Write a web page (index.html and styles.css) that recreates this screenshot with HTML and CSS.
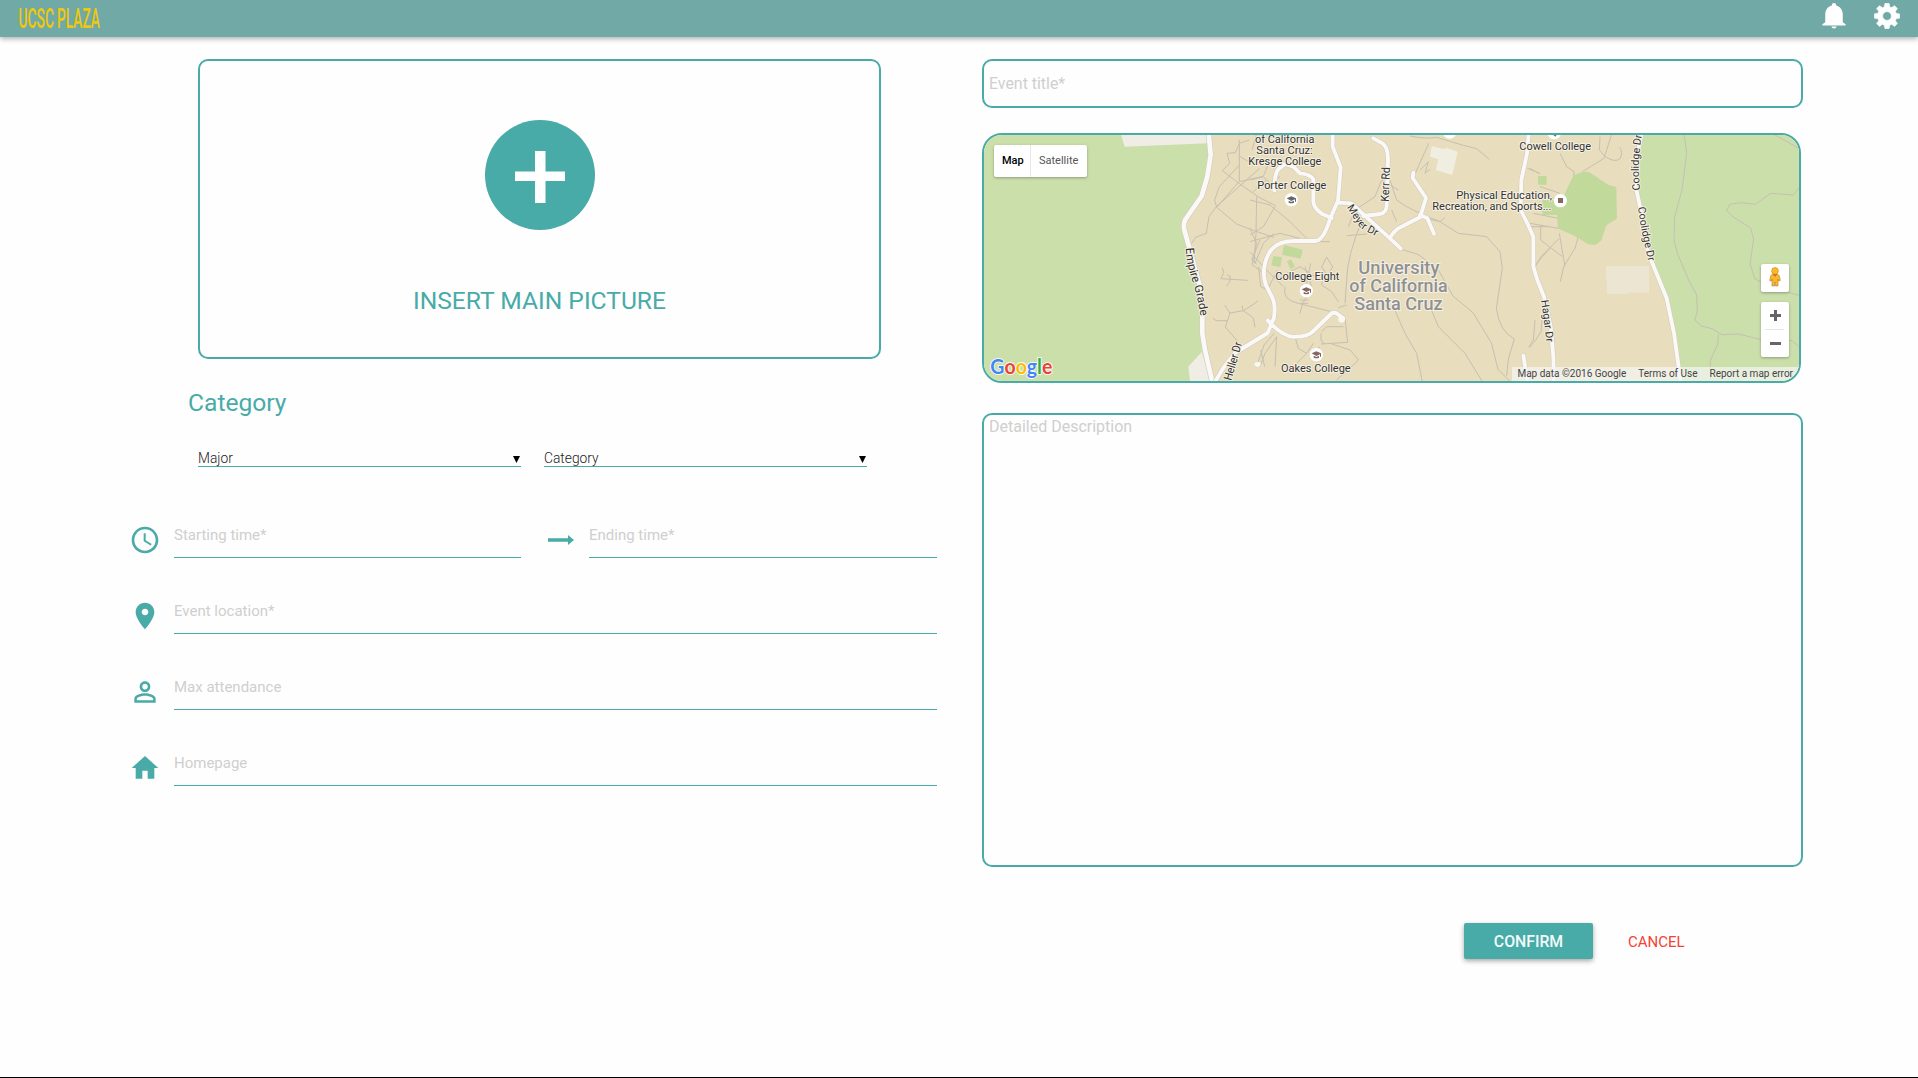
FILE: index.html
```html
<!DOCTYPE html>
<html lang="en">
<head>
<meta charset="utf-8">
<title>UCSC Plaza</title>
<link rel="stylesheet" href="styles.css">
</head>
<body>
<header class="topbar">
  <svg class="brand" width="82" height="24" viewBox="0 0 82 24"><text x="-.5" y="22" textLength="35.500" lengthAdjust="spacingAndGlyphs">UCSC</text><text x="38" y="22" textLength="43" lengthAdjust="spacingAndGlyphs">PLAZA</text></svg>
  <div class="topbar-actions">
    <svg width="30" height="30" viewBox="0 0 24 24"><path d="M12 22c1.100 0 2-.6 2-1.600h-4c0 1 .89 1.600 2 1.600zm7-5v-6.500c0-3.400-2-6.200-5.300-7V2.900c0-.8-.8-1.400-1.700-1.400s-1.700.6-1.700 1.400v.6C7 4.300 5 7.100 5 10.500V17l-2.300 1.600v.9h18.600v-.9z"/></svg>
    <svg width="30" height="30" viewBox="0 0 24 24"><path d="M19.430 12.980c.04-.32.07-.64.07-.98s-.03-.66-.07-.98l2.110-1.650c.19-.15.24-.42.12-.64l-2-3.460c-.12-.22-.39-.3-.61-.22l-2.490 1c-.52-.4-1.080-.73-1.690-.98l-.38-2.650C14.460 2.180 14.250 2 14 2h-4c-.25 0-.46.18-.49.42l-.38 2.650c-.61.25-1.170.59-1.690.98l-2.490-1c-.23-.09-.49 0-.61.22l-2 3.460c-.13.22-.07.49.12.64l2.110 1.650c-.04.32-.07.65-.07.98s.03.66.07.98l-2.110 1.650c-.19.15-.24.42-.12.64l2 3.460c.12.22.39.3.61.22l2.490-1c.52.4 1.080.73 1.690.98l.38 2.650c.03.24.24.42.49.42h4c.25 0 .46-.18.49-.42l.38-2.650c.61-.25 1.170-.59 1.690-.98l2.490 1c.23.09.49 0 .61-.22l2-3.460c.12-.22.07-.49-.12-.64z" fill="none"/><path fill-rule="evenodd" d="M10.300 2h3.400l.5 2.700 1.500.6L18 3.700 20.300 6l-1.600 2.300.6 1.500 2.700.5v3.400l-2.700.5-.6 1.500 1.600 2.300-2.300 2.300-2.300-1.600-1.500.6-.5 2.700h-3.400l-.5-2.700-1.500-.6L6 20.300 3.700 18l1.600-2.300-.6-1.500L2 13.700v-3.400l2.700-.5.6-1.500L3.700 6 6 3.700l2.300 1.600 1.500-.6zM12 8.500a3.500 3.500 0 1 0 0 7 3.500 3.500 0 1 0 0-7z" stroke="#fff" stroke-width=".5" stroke-linejoin="round"/></svg>
  </div>
</header>
<main class="page">
  <section class="left">
    <div class="picture">
      <div class="add"><svg width="50" height="52" viewBox="0 0 50 52"><path d="M20 0h10.500v20.500H50v9.500H30.500v22H20V30H0v-9.500h20z"/></svg></div>
      <div class="picture-label">INSERT MAIN PICTURE</div>
    </div>
    <h2 class="heading">Category</h2>
    <div class="selects">
      <div class="select"><span>Major</span><svg width="7" height="7" viewBox="0 0 7 7"><path d="M0 0h7L3.500 7z"/></svg></div>
      <div class="select"><span>Category</span><svg width="7" height="7" viewBox="0 0 7 7"><path d="M0 0h7L3.500 7z"/></svg></div>
    </div>
    <div class="rows">
      <div class="row">
        <svg class="icon" viewBox="0 0 24 24"><path d="M11.990 2C6.470 2 2 6.480 2 12s4.470 10 9.990 10C17.520 22 22 17.520 22 12S17.520 2 11.990 2zM12 20c-4.420 0-8-3.580-8-8s3.580-8 8-8 8 3.580 8 8-3.580 8-8 8zm.5-13H11v6l5.250 3.150.75-1.230-4.500-2.670z"/></svg>
        <label class="field start">Starting time*</label>
        <svg class="arrow" width="26" height="10" viewBox="0 0 26 10"><path d="M0 3.200h20V0l6 5-6 5V6.800H0z"/></svg>
        <label class="field">Ending time*</label>
      </div>
      <div class="row">
        <svg class="icon" viewBox="0 0 24 24"><path d="M12 2C8.130 2 5 5.130 5 9c0 5.250 7 13 7 13s7-7.750 7-13c0-3.870-3.130-7-7-7zm0 9.500c-1.380 0-2.500-1.120-2.500-2.500s1.120-2.500 2.500-2.500 2.500 1.120 2.500 2.500-1.120 2.500-2.500 2.500z"/></svg>
        <label class="field">Event location*</label>
      </div>
      <div class="row">
        <svg class="icon" viewBox="0 0 24 24"><path d="M12 5.900c1.160 0 2.100.94 2.100 2.100s-.94 2.100-2.100 2.100S9.900 9.160 9.900 8s.94-2.100 2.100-2.100m0 9c2.970 0 6.100 1.460 6.100 2.100v1.100H5.900V17c0-.64 3.130-2.100 6.100-2.100M12 4C9.790 4 8 5.790 8 8s1.790 4 4 4 4-1.790 4-4-1.790-4-4-4zm0 9c-2.670 0-8 1.340-8 4v3h16v-3c0-2.660-5.330-4-8-4z"/></svg>
        <label class="field">Max attendance</label>
      </div>
      <div class="row">
        <svg class="icon" viewBox="0 0 24 24"><path d="M10 20v-6h4v6h5v-8h3L12 3 2 12h3v8z"/></svg>
        <label class="field">Homepage</label>
      </div>
    </div>
  </section>
  <section class="right">
    <div class="title-box">Event title*</div>
    <div class="map">
      <svg class="map-art" viewBox="42 45 2445 738">
        <rect class="green" x="42" y="45" width="2445" height="738"/>
        <path class="sand" d="M716 40L722 105 712 170 695 228 645 300 643 330 657 380 690 500 697 640 705 690 728 790H2133L2112 640 2090 535 2035 400 2010 260 1998 200 2012 40z"/>
        <path class="pale" d="M452 40L464 80 712 70V40zM655 740L695 696 725 790H661z"/>
        <path class="pale" d="M1908 438h129v80h-62v4h-64v-42h-3z" opacity=".5"/>
        <g class="paths">
          <path d="M665 370l12-18 32-12 8-50 22-30 130-115M740 262l65-75M740 262l-6-22 14-40 60-65M740 262l60 50 52 20 60 20M757 152l50 38 60 42 50 25M757 152l22-22-8-30 25-2 12-28 30-10M808 60v125l72-16 20-50M808 108l24 15M860 230l-2 110-6 90M840 325l20 45-14 64 28 20M757 443l4 15-8 18 80 5M771 464l10 6-2 16-10 12M728 594l10 8h35M764 555l16 24 40-7 32-20 12-10M780 579l-14 42 36 42M820 572l-4-16M820 572l30 22 5 28M912 640l-30 35-17 50M872 690l12 50"/>
          <path d="M855 430L880 370 912 340M866 440l6 60 20 10 30-60" />
        </g>
        <g class="paths" transform="translate(840 0)">
          <path d="M0 180l40-10 20 20 30-20M10 215l40-35M20 40l-14 50M0 240l60 15 60 50 50 50M0 365l90-25 60 15M75 260l-35 60-40 25M0 395l40 45M30 360l-25 60 15 12M150 365h90M230 411l-15 30 18 25 15-25zM182 430l-12 60M165 440l20 60M105 500q-10 40 40 50l120 30M90 470l60-30 60 40M40 440l60 60M150 580l8-30 15-25M150 540h25M152 550h22M265 545l-20-30-30-20 5-40M290 555l-25 8M340 290q-50 120-50 190l-5 70M291 347l60-5M445 210l-50-30-20 50-60 40-20 50M420 180l20 60 30 20 40 20M425 270l15 35M480 48q50 10 80 4l80 24 40 10 38 32M536 70l-40 90M510 290l60 15 55 35 85 10 40 45 7 50-18 120q10 70 54 92l-18 60-5 50M520 285l50 20 15-12M454 388l50 15 60 45 45 80 60 50 55 90 20 80 35 35M430 560l35 80 35 60 18 90M540 560l25 60 80 80 55 90M285 595l8 72-80 5M215 635l15-15h50M213 640v20l10 12M210 680l-30 25M135 650l10 35 25 15 20-30M80 650l-5 90M80 650l-35 50-15 40M240 670l60 20 26 30-66 60M170 700l-30 30M510 150l25-25-10 35 15-12M840 145l28 16M900 320h-60M900 385l-45 50M855 600l-5 60-14 22"/>
        </g>
        <g class="paths" transform="translate(1650 0)">
          <path d="M120 100l20 40 22 15-3 35-44 90v45M187 155l65-40 24-75M240 50l-2 40 18 20q30 20 45 5 8-20-2-33M22 145l38 15M40 280l75 15M30 310l85 15M62 315v45l65 50M118 340l12 70 5 30M175 350l-10 35-34 55-10 45M118 355l-55 55-20 35M66 600l-3 35-16 25-18 22M115 240l-50-20M60 200l60 20"/>
          <path d="M492 40l8 60-14 110-22 80-2 70 10 40 34 80 24 45 2 50-8 25 20 18 32 8 30 18 50-2 80 20h80l26 22M595 642l-2 30-22 50v60M765 45l75 42M840 200l-20 25-68-5-46 33-44-5-32 5-10 18 20 20 52 33 9 33-11 75 15 45 20 10 80 30 36 10"/>
        </g>
        <path class="park" d="M1838 155h18l60 40 23 6 2 95-32 20-15 45-17 14-22-2-45-27-45-20-4-50 30-70 20-40zM1704 168h26v26h-26zM1717 240h48v45h-48zM942 375l56 14-6 27-56-12zM910 408l26 4-5 30-27-6zM951 424l12-6 12 22-14 8z"/>
        <path class="building" d="M1385 78l38 10 4-5 36 12-16 70-50-15 8-32-25-8z"/>
        <g class="casing"><path d="M716 40L722 105 712 170 695 228 645 300Q640 315 643 330L657 380 690 500 697 590 697 640 705 690 728 790" stroke-width="18"/></g>
        <g class="road"><path d="M716 40L722 105 712 170 695 228 645 300Q640 315 643 330L657 380 690 500 697 590 697 640 705 690 728 790" stroke-width="14"/></g>
        <defs>
          <g id="roads">
            <path d="M1088 40v40l24 62-8 100-24 55q-20 66-45 66h-60q-60 0-80 40-22 45-8 90l20 40q10 20 5 60l-19 46-98 60-35 45-30 50M893 601q50 54 85 49 35 0 50-15l58-56h12l22 16M1085 294l-28-12q-24-15-27-35v-70q-10-15-40-17l-20-20-25-8-20 16q-12 12-12 64M1104 248l40 2 110 100 38 35M1180 288l50-6q20-5 20-25l4-140q0-40-22-50l-22-12M1260 355q10-25 40-38l50-25 18-58-40-60 2-16M1350 285l22 10 20 46"/>
            <path d="M1676 40l-5 60-17 80-2 90 20 40 18 40v90l12 40 20 50 20 90 8 90 2 90M1660 706l14 90M2015 40l-15 70-3 90 13 60 25 140 55 135 22 105 20 145"/>
          </g>
        </defs>
        <use href="#roads" class="casing" stroke-width="15"/>
        <use href="#roads" class="road" stroke-width="11.500"/>
        <circle cx="1115" cy="598" r="10" fill="#f9f8f5"/><ellipse cx="863" cy="733" rx="9" ry="7" fill="#f9f8f5"/>
        <g class="pins"><circle cx="964" cy="239" r="20"/><circle cx="1009" cy="512" r="20"/><circle cx="1039" cy="704" r="20"/><circle cx="1771" cy="242" r="20"/><circle cx="1439" cy="36" r="20"/><circle cx="1753" cy="38" r="20"/></g>
        <defs><path id="cap" d="M-14-4L0-10 14-4V6H11V-1L0 4zM-8 3L0 7 8 3V9Q0 12-8 9z"/></defs>
        <g fill="#85685f"><use href="#cap" x="964" y="239" fill="#666"/><use href="#cap" x="1009" y="512"/><use href="#cap" x="1039" y="704"/><path d="M1764 234h15v15h-15zM1750 45l6 5 4-5z"/></g>
        <g class="labels">
          <text x="855" y="68" textLength="178" lengthAdjust="spacingAndGlyphs">of California</text>
          <text x="859" y="101" textLength="169" lengthAdjust="spacingAndGlyphs">Santa Cruz:</text>
          <text x="835" y="134" textLength="219" lengthAdjust="spacingAndGlyphs">Kresge College</text>
          <text x="862" y="206" textLength="207" lengthAdjust="spacingAndGlyphs">Porter College</text>
          <text x="916" y="479" textLength="192" lengthAdjust="spacingAndGlyphs">College Eight</text>
          <text x="933" y="755" textLength="209" lengthAdjust="spacingAndGlyphs">Oakes College</text>
          <text x="1648" y="89" textLength="215" lengthAdjust="spacingAndGlyphs">Cowell College</text>
          <text x="1459" y="236" textLength="287" lengthAdjust="spacingAndGlyphs">Physical Education,</text>
          <text x="1387" y="269" textLength="357" lengthAdjust="spacingAndGlyphs">Recreation, and Sports...</text>
          <text transform="translate(1256 245) rotate(-88)" textLength="103" lengthAdjust="spacingAndGlyphs">Kerr Rd</text>
          <text transform="translate(784 783) rotate(-74)" textLength="118" lengthAdjust="spacingAndGlyphs">Heller Dr</text>
          <path id="empire" class="guide" d="M647 384Q650 440 668 486 684 530 694 610"/>
          <text><textPath href="#empire">Empire Grade</textPath></text>
          <path id="meyer" class="guide" d="M1130 262L1162 312Q1172 327 1188 334L1250 366"/>
          <text class="tight"><textPath href="#meyer">Meyer Dr</textPath></text>
          <path id="cool1" class="guide" d="M2011 210Q2000 130 2016 44L2020 20"/>
          <text class="tight"><textPath href="#cool1">Coolidge Dr</textPath></text>
          <path id="cool2" class="guide" d="M2004 262Q2014 340 2039 440"/>
          <text class="tight"><textPath href="#cool2">Coolidge Dr</textPath></text>
          <path id="hagar" class="guide" d="M1713 542Q1722 600 1732 690"/>
          <text class="tight"><textPath href="#hagar">Hagar Dr</textPath></text>
        </g>
        <g class="campus">
          <text x="1165" y="462" textLength="243" lengthAdjust="spacingAndGlyphs">University</text>
          <text x="1138" y="516" textLength="295" lengthAdjust="spacingAndGlyphs">of California</text>
          <text x="1153" y="570" textLength="265" lengthAdjust="spacingAndGlyphs">Santa Cruz</text>
        </g>
        <text class="google" x="61" y="762" textLength="186" lengthAdjust="spacingAndGlyphs"><tspan fill="#4285f4">G</tspan><tspan fill="#ea4335">o</tspan><tspan fill="#fbbc05">o</tspan><tspan fill="#4285f4">g</tspan><tspan fill="#34a853">l</tspan><tspan fill="#ea4335">e</tspan></text>
      </svg>
      <div class="map-type"><span class="active">Map</span><span>Satellite</span></div>
      <div class="map-tools">
        <div class="pegman"><svg width="12" height="20" viewBox="0 0 12 20"><path d="M3.500 7.500h5q1.500 0 2 2l.8 4-1.800.5-.5-2v7H6.500v-4h-1v4H3v-7L2.500 14l-1.800-.5.8-4q.5-2 2-2z" fill="#fbb829" stroke="#a98238" stroke-width=".6"/><circle cx="6" cy="4" r="3.400" fill="#fbb829" stroke="#c58c20" stroke-width=".6"/><path d="M3.500 7h5L6 10z" fill="#e06c20"/></svg></div>
        <div class="zoom">
          <svg width="28" height="27" viewBox="0 0 28 27"><path d="M9 13.500h11M14.500 8v11"/></svg>
          <svg width="28" height="28" viewBox="0 0 28 28"><path d="M9 14.500h11"/></svg>
        </div>
      </div>
      <div class="legal"><span>Map data ©2016 Google</span><span>Terms of Use</span><span>Report a map error</span></div>
    </div>
    <div class="description">Detailed Description</div>
    <div class="actions"><button class="confirm">CONFIRM</button><a class="cancel">CANCEL</a></div>
  </section>
</main>
</body>
</html>
```
FILE: styles.css
```css
* { box-sizing: border-box; }
body {
  margin: 0;
  height: 1078px;
  display: flex;
  flex-direction: column;
  overflow: hidden;
  background: #fefefe;
  border-bottom: 1px solid #000;
  font-family: Roboto, "Liberation Sans", sans-serif;
  color: #48aba8;
}
svg { display: block; flex: none; }
.topbar {
  height: 37px;
  flex: none;
  display: flex;
  justify-content: space-between;
  padding: 0 16px 0 19px;
  background: #70a9a5;
  box-shadow: 0 2px 5px rgba(0, 0, 0, .3);
}
.brand { margin-top: 6px; overflow: visible; }
.brand text { font-size: 28px; font-weight: 500; fill: #efc80c; }
.topbar-actions { display: flex; gap: 23px; padding-top: 1px; fill: #fff; }
.page { display: flex; padding: 22px 0 0 129px; }
.left { width: 853px; display: flex; flex-direction: column; }
.right { width: 821px; display: flex; flex-direction: column; }
.picture {
  width: 683px;
  height: 300px;
  margin-left: 69px;
  padding-top: 59px;
  display: flex;
  flex-direction: column;
  align-items: center;
  border: 2px solid #48aba8;
  border-radius: 10px;
}
.add {
  width: 110px;
  height: 110px;
  display: flex;
  justify-content: center;
  padding-top: 31px;
  border-radius: 50%;
  background: #48aba8;
  fill: #fff;
}
.picture-label { margin-top: 56px; font-size: 24.6px; line-height: 30px; }
.heading { margin: 29px 0 0 59px; font-size: 24.6px; line-height: 30px; font-weight: 400; }
.selects { display: flex; gap: 23px; margin: 31px 0 0 69px; }
.select {
  width: 323px;
  height: 18px;
  display: flex;
  justify-content: space-between;
  border-bottom: 1px solid #48aba8;
  padding-right: 1px;
  font-size: 13.8px;
  font-weight: 300;
  line-height: 19px;
  color: #222;
}
.select svg { margin-top: 7px; fill: #000; }
.rows { display: flex; flex-direction: column; gap: 42px; margin-top: 57px; }
.row { width: 808px; height: 34px; display: flex; }
.icon { width: 32px; height: 32px; margin-right: 13px; fill: #48aba8; }
.arrow { margin: 11px 15px 0 27px; fill: #48aba8; }
.field { flex: 1; border-bottom: 1px solid #48aba8; font-size: 15px; line-height: 23px; color: #cfcfcf; }
.field.start { flex: 0 0 347px; }
.title-box {
  height: 49px;
  padding-left: 5px;
  border: 2px solid #48aba8;
  border-radius: 10px;
  font-size: 15.9px;
  line-height: 45px;
  color: #cfcfcf;
}
.map {
  position: relative;
  width: 819px;
  height: 250px;
  margin-top: 25px;
  overflow: hidden;
  border: 2px solid #48aba8;
  border-radius: 20px;
}
.map-art { width: 815px; height: 246px; }
.green { fill: #cbdfab; }
.sand { fill: #e8ddbd; }
.pale { fill: #f0ede5; }
.park { fill: #c1da9c; }
.building { fill: #efeee0; }
.paths { fill: none; stroke: #c7bfb1; stroke-width: 3; }
.casing, .road { fill: none; stroke-linecap: round; stroke-linejoin: round; }
.casing { stroke: #d5cdbd; }
.road { stroke: #faf9f7; }
.pins { fill: #fff; }
.labels { font-size: 35px; fill: #333; stroke: #f6f1e3; stroke-width: 6px; stroke-linejoin: round; }
.labels text, .campus text, .google { paint-order: stroke; }
.labels .tight { font-size: 32px; }
.guide { fill: none; stroke: none; }
.campus { font-size: 54px; font-weight: 500; fill: #8e9093; stroke: #f6f1e3; stroke-width: 6px; }
.google { font-family: Lato, Roboto, sans-serif; font-size: 62px; font-weight: 700; stroke: #fff; stroke-width: 5px; }
.map-type {
  position: absolute;
  left: 10px;
  top: 10px;
  height: 32px;
  display: flex;
  border-radius: 2px;
  background: #fff;
  box-shadow: 0 1px 3px rgba(0, 0, 0, .3);
  font-size: 11px;
  line-height: 31px;
  color: #565656;
}
.map-type span { padding: 0 8px; width: 56px; }
.map-type .active { width: 37px; border-right: 1px solid #e6e6e6; font-weight: 500; color: #000; }
.map-tools {
  position: absolute;
  right: 10px;
  top: 129px;
  display: flex;
  flex-direction: column;
  gap: 10px;
}
.pegman, .zoom { width: 28px; border-radius: 2px; background: #fff; box-shadow: 0 1px 3px rgba(0, 0, 0, .3); }
.pegman { height: 28px; padding: 3px 8px; }
.zoom { height: 55px; fill: none; stroke: #666; stroke-width: 3; }
.zoom svg + svg { background: linear-gradient(#e6e6e6, #e6e6e6) 4px 0 / 19px 1px no-repeat; }
.legal {
  position: absolute;
  right: 0;
  bottom: 0;
  height: 14px;
  display: flex;
  gap: 12px;
  padding: 0 6px 0 5px;
  background: rgba(245, 245, 245, .7);
  font-size: 10px;
  line-height: 14px;
  color: #444;
}
.description {
  height: 454px;
  margin-top: 30px;
  padding-left: 5px;
  border: 2px solid #48aba8;
  border-radius: 10px;
  font-size: 16px;
  line-height: 24px;
  color: #cfcfcf;
}
.actions { display: flex; gap: 35px; margin: 56px 0 0 482px; }
.confirm {
  width: 129px;
  height: 36px;
  padding: 1px 0 0;
  border: 0;
  border-radius: 2px;
  background: #48aba8;
  box-shadow: 0 2px 5px rgba(0, 0, 0, .35);
  font: 500 15.800px/35px Roboto, sans-serif;
  color: #f3fafa;
}
.cancel { font-size: 15px; line-height: 38px; color: #f44336; }
```
